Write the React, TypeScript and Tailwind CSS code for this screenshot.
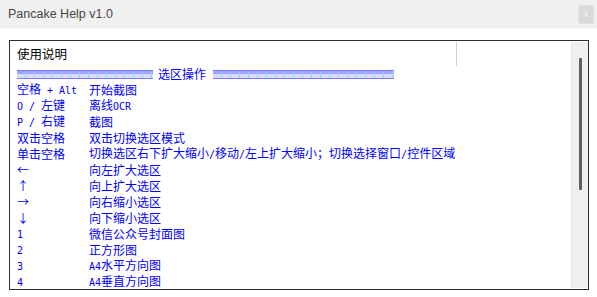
import React from 'react';

const cjk = '"Noto Sans CJK SC", "Liberation Sans", sans-serif';

// SimSun-like mix: half-width latin at 6px, full-width CJK at 12px
const Mixed: React.FC<{ text: string }> = ({ text }) => {
  const runs = text.match(/[\x20-\x7e]+|[^\x20-\x7e]+/g) || [];
  return (
    <>
      {runs.map((r, i) =>
        /^[\x20-\x7e]+$/.test(r) ? (
          <span key={i} className="text-[10px] leading-[14px] whitespace-pre font-['DejaVu_Sans_Mono',monospace]">
            {r}
          </span>
        ) : (
          <span key={i} className="text-[12px] leading-[14px] font-['Noto_Sans_CJK_SC',sans-serif]">
            {r}
          </span>
        )
      )}
    </>
  );
};

const rows: [string, string][] = [
  ['空格 + Alt', '开始截图'],
  ['O / 左键', '离线OCR'],
  ['P / 右键', '截图'],
  ['双击空格', '双击切换选区模式'],
  ['单击空格', '切换选区右下扩大缩小/移动/左上扩大缩小；切换选择窗口/控件区域'],
  ['←', '向左扩大选区'],
  ['↑', '向上扩大选区'],
  ['→', '向右缩小选区'],
  ['↓', '向下缩小选区'],
  ['1', '微信公众号封面图'],
  ['2', '正方形图'],
  ['3', 'A4水平方向图'],
  ['4', 'A4垂直方向图'],
];

const Bar: React.FC<{ w: string }> = ({ w }) => (
  <span
    className={`inline-block h-[9px] ${w} border-y border-[#7c7cff] bg-[image:repeating-linear-gradient(90deg,transparent_0_8px,#86dcff_8px_9px),linear-gradient(#a2a2ff_50%,#dadaff_50%)]`}
  />
);

export default function App() {
  return (
    <div className="w-[597px] h-[297px] bg-white overflow-hidden">
      <div className="h-[29px] bg-[#f0f0f0] flex items-center justify-between pl-[8px] pr-[3px] border-b border-[#f6f6f6]">
        <span className="text-[12.5px] text-[#474747] font-['Liberation_Sans',sans-serif]">Pancake Help v1.0</span>
        <div className="w-[16px] h-[19px] bg-[#d9d9d9] border border-[#e4e4e4] flex items-center justify-center text-[9px] leading-none text-[#f4f4f4] font-['Liberation_Sans',sans-serif]">
          x
        </div>
      </div>

      <div className="ml-[9px] mt-[11px] w-[580px] h-[250px] border border-[#2b2f33] flex overflow-hidden">
        <div className="flex-1 flex flex-col">
          <div className="h-[26px] flex items-start">
            <div className="w-[447px] h-[24px] mt-[1px] border-r border-[#cfcfcf] pl-[7px] flex items-center text-[12.5px] text-black" style={{ fontFamily: cjk }}>
              使用说明
            </div>
          </div>
          <div className="pl-[7px] text-[#0000ff] text-[12px] leading-[14px]">
            <div className="h-[16px] flex items-center">
              <Bar w="w-[136px]" />
              <span className="ml-[5px] mr-[7px]">
                <Mixed text="选区操作" />
              </span>
              <Bar w="w-[181px]" />
            </div>
            {rows.map(([k, v], i) => (
              <div key={i} className="h-[16px] flex items-center whitespace-nowrap">
                <div className="w-[72px] shrink-0">
                  <Mixed text={k} />
                </div>
                <div>
                  <Mixed text={v} />
                </div>
              </div>
            ))}
          </div>
        </div>
        <div className="w-[17px] mt-[1px] mb-[1px] bg-[#efefef] border-l border-[#e6e6e6] flex justify-center pt-[16px]">
          <div className="w-[3px] h-[132px] bg-[#606060] rounded-[1px]" />
        </div>
      </div>
    </div>
  );
}
